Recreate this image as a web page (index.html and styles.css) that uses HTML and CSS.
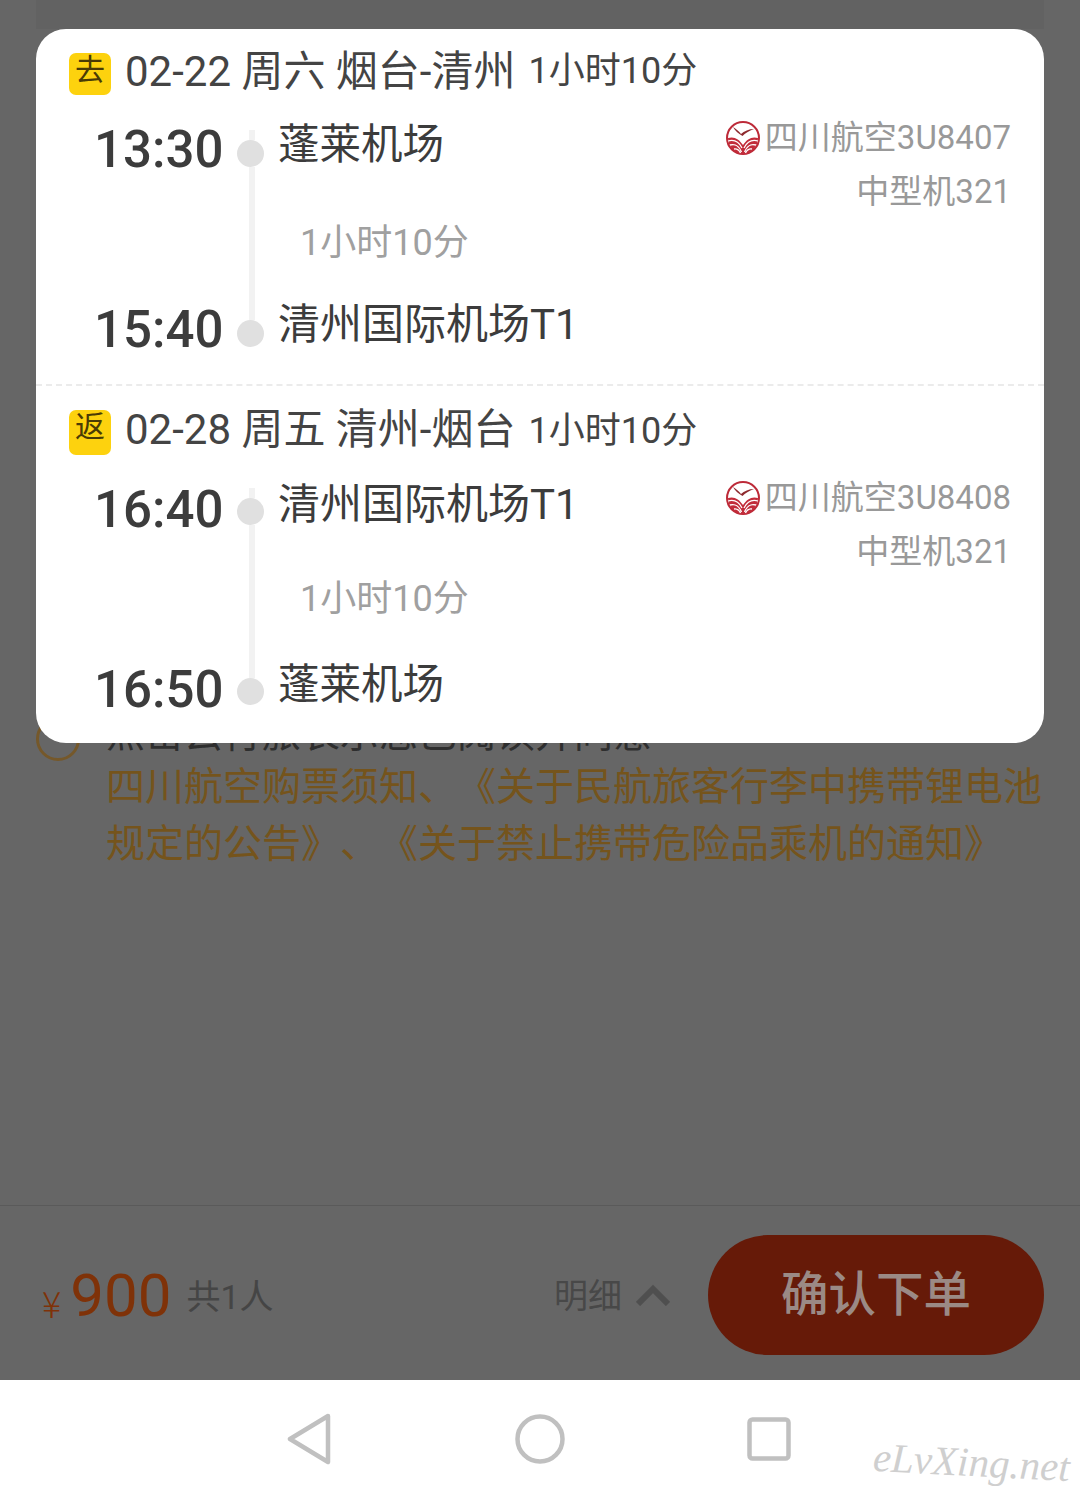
FILE: index.html
```html
<!DOCTYPE html>
<html lang="en">
<head>
    <meta charset="UTF-8">
    <meta name="viewport" content="width=device-width, initial-scale=1.0">
    <title>确认订单</title>
    <link rel="stylesheet" href="styles.css">
</head>
<body>

    <div class="screen">
        <div class="behind-strip"></div>

        <!-- Flight details sheet -->
        <div class="sheet">
            <div class="leg leg-out">
                <div class="leg-head">
                    <span class="badge">去</span>
                    <span class="leg-route">02-22 周六 烟台-清州</span>
                    <span class="leg-total">1小时10分</span>
                </div>
                <div class="segment">
                    <div class="time">13:30</div>
                    <div class="rail">
                        <div class="rail-stub"></div>
                        <div class="rail-dot"></div>
                        <div class="rail-line"></div>
                        <div class="rail-dot"></div>
                    </div>
                    <div class="airport">蓬莱机场</div>
                    <div class="carrier">
                        <div class="carrier-name">
                            <svg class="airline-logo" viewBox="0 0 34 34">
                                <circle cx="17" cy="17" r="16" fill="#fff" stroke="#bd2a38" stroke-width="2"/>
                                <path d="M2 17 C8 15 13 18 17 24 C21 18 26 15 32 17 C32 25 26 33 17 33 C8 33 2 25 2 17 Z" fill="#c22c3a"/>
                                <path d="M2 20 C9 18 13 21 16 27 M32 20 C25 18 21 21 18 27 M4 24 C10 22.500 13 25 15.500 31 M30 24 C24 22.500 21 25 18.500 31 M8 28 C11 27.500 13 29 14.500 32 M26 28 C23 27.500 21 29 19.500 32" fill="none" stroke="#fff" stroke-width="1.300"/>
                                <path d="M7 6 C10 8 13 10 15 13 C18 10 23 8 28 8 C23 10 19 12 16.500 15 C13 13 9 10 7 6 Z" fill="#8e2a2e"/>
                            </svg>
                            四川航空3U8407
                        </div>
                        <div class="carrier-plane">中型机321</div>
                    </div>
                    <div class="duration">1小时10分</div>
                    <div class="time time-end">15:40</div>
                    <div class="airport airport-end airport-long">清州国际机场T1</div>
                </div>
            </div>

            <div class="leg leg-back">
                <div class="leg-head">
                    <span class="badge badge-tall">返</span>
                    <span class="leg-route">02-28 周五 清州-烟台</span>
                    <span class="leg-total">1小时10分</span>
                </div>
                <div class="segment segment-back">
                    <div class="time">16:40</div>
                    <div class="rail">
                        <div class="rail-stub"></div>
                        <div class="rail-dot"></div>
                        <div class="rail-line"></div>
                        <div class="rail-dot"></div>
                    </div>
                    <div class="airport airport-long">清州国际机场T1</div>
                    <div class="carrier">
                        <div class="carrier-name">
                            <svg class="airline-logo" viewBox="0 0 34 34">
                                <circle cx="17" cy="17" r="16" fill="#fff" stroke="#bd2a38" stroke-width="2"/>
                                <path d="M2 17 C8 15 13 18 17 24 C21 18 26 15 32 17 C32 25 26 33 17 33 C8 33 2 25 2 17 Z" fill="#c22c3a"/>
                                <path d="M2 20 C9 18 13 21 16 27 M32 20 C25 18 21 21 18 27 M4 24 C10 22.500 13 25 15.500 31 M30 24 C24 22.500 21 25 18.500 31 M8 28 C11 27.500 13 29 14.500 32 M26 28 C23 27.500 21 29 19.500 32" fill="none" stroke="#fff" stroke-width="1.300"/>
                                <path d="M7 6 C10 8 13 10 15 13 C18 10 23 8 28 8 C23 10 19 12 16.500 15 C13 13 9 10 7 6 Z" fill="#8e2a2e"/>
                            </svg>
                            四川航空3U8408
                        </div>
                        <div class="carrier-plane">中型机321</div>
                    </div>
                    <div class="duration duration-back">1小时10分</div>
                    <div class="time time-end">16:50</div>
                    <div class="airport airport-end">蓬莱机场</div>
                </div>
            </div>
        </div>

        <!-- Agreement text, partly under the sheet -->
        <div class="notice">
            <div class="notice-check"></div>
            <div class="notice-text">
                <div class="notice-lead">点击云行旅表示您已阅读并同意</div>
                <div class="notice-links">四川航空购票须知、《关于民航旅客行李中携带锂电池规定的公告》、《关于禁止携带危险品乘机的通知》</div>
            </div>
        </div>

        <!-- Price bar -->
        <div class="price-bar">
            <div class="price">
                <span class="price-sign">¥</span>
                <span class="price-num">900</span>
                <span class="price-people">共1人</span>
            </div>
            <div class="detail-toggle">
                <span>明细</span>
                <svg class="chevron" viewBox="0 0 34 22">
                    <path d="M2 20 L17 5 L32 20" fill="none" stroke="#4f4f4f" stroke-width="6"/>
                </svg>
            </div>
            <button class="confirm-btn">确认下单</button>
        </div>
    </div>

    <!-- Android nav bar -->
    <div class="nav-bar">
        <svg class="nav-back" viewBox="0 0 44 52">
            <path d="M41 3 L3 26 L41 49 Z" fill="none" stroke="#c0c0c0" stroke-width="4.500" stroke-linejoin="round"/>
        </svg>
        <svg class="nav-home" viewBox="0 0 50 50">
            <circle cx="25" cy="25" r="22.500" fill="none" stroke="#c0c0c0" stroke-width="4.500"/>
        </svg>
        <svg class="nav-recent" viewBox="0 0 44 44">
            <rect x="2.500" y="2.500" width="39" height="39" rx="3" fill="none" stroke="#c0c0c0" stroke-width="4.500"/>
        </svg>
        <div class="watermark">eLvXing.net</div>
    </div>

</body>
</html>
```

FILE: styles.css
```css
* {
    box-sizing: border-box;
}
body {
    margin: 0;
    width: 1080px;
    height: 1498px;
    overflow: hidden;
    font-family: Roboto, 'Noto Sans CJK SC', sans-serif;
    background: #666;
    text-spacing-trim: space-all;
}

.screen {
    height: 1380px;
    background: #666;
    display: flex;
    flex-direction: column;
}
.behind-strip {
    height: 29px;
    margin: 0 36px;
    background: #626262;
}

.sheet {
    position: relative;
    z-index: 1;
    height: 714px;
    margin: 0 36px;
    background: #fff;
    border-radius: 30px;
}
.leg {
    padding: 24px 33px 0 33px;
    height: 355px;
}
.leg-back {
    height: 359px;
    padding-top: 24px;
    border-top: 2px dashed #ebebeb;
}
.leg-head {
    display: flex;
    align-items: flex-start;
    height: 42px;
    color: #444;
}
.badge {
    width: 42px;
    height: 42px;
    flex: none;
    background: #fdd20e;
    border-radius: 7px;
    color: #4a3b05;
    font-size: 30px;
    line-height: 34px;
    text-align: center;
}
.badge-tall {
    height: 45px;
}
.leg-route {
    margin-left: 14px;
    margin-top: -2px;
    font-size: 42px;
    line-height: 42px;
    white-space: nowrap;
}
.leg-total {
    margin-left: 13px;
    margin-top: -3px;
    font-size: 36px;
    line-height: 42px;
    white-space: nowrap;
}
.leg-back .leg-route {
    margin-top: -1px;
}
.leg-back .leg-total {
    margin-top: 0;
}

.segment {
    display: grid;
    grid-template-columns: 128px 27px 1fr auto;
    grid-template-rows: 70px 120px 60px;
    column-gap: 15px;
    margin-top: 15px;
    padding-left: 25px;
}
.segment-back {
    margin-top: 18px;
}
.time {
    grid-column: 1;
    font-size: 51px;
    font-weight: 500;
    line-height: 60px;
    color: #3c3c3c;
    white-space: nowrap;
    align-self: end;
    margin-top: -1px;
}
.time-end {
    grid-row: 3;
}
.rail {
    grid-column: 2;
    grid-row: 1 / 4;
    margin-top: 20px;
    display: flex;
    flex-direction: column;
}
.segment-back .rail {
    margin-top: 18px;
}
.rail-stub,
.rail-line {
    width: 6px;
    margin-left: 12px;
    background: #f2f2f2;
}
.rail-stub {
    height: 10px;
}
.rail-line {
    height: 153px;
}
.rail-dot {
    width: 27px;
    height: 27px;
    flex: none;
    border-radius: 50%;
    background: #e0e0e0;
}
.airport {
    grid-column: 3;
    margin-top: 11px;
    margin-left: -1px;
    font-size: 41.500px;
    line-height: 48px;
    color: #3c3c3c;
    white-space: nowrap;
}
.airport-long {
    font-size: 42px;
}
.airport-end {
    grid-row: 3;
    margin-top: 1px;
}
.carrier {
    grid-column: 4;
    grid-row: 1 / 3;
    margin-top: 1px;
    text-align: right;
    color: #999;
    line-height: 54px;
}
.carrier-name {
    display: flex;
    align-items: center;
    font-size: 33px;
    white-space: nowrap;
}
.carrier-plane {
    font-size: 33px;
}
.airline-logo {
    width: 34px;
    height: 34px;
    margin-right: 5px;
}
.duration {
    grid-column: 3;
    grid-row: 2;
    align-self: center;
    margin-top: -2px;
    padding-left: 21px;
    font-size: 36px;
    color: #a0a0a0;
}
.duration-back {
    margin-top: -10px;
}

.notice {
    display: flex;
    margin-top: -26px;
    padding-left: 36px;
}
.notice-check {
    width: 44px;
    height: 44px;
    flex: none;
    border: 3px solid #75582a;
    border-radius: 50%;
}
.notice-text {
    margin-left: 26px;
    margin-top: -15px;
    width: 940px;
    font-size: 39px;
    line-height: 57px;
}
.notice-lead {
    margin-top: 4px;
    margin-bottom: -4px;
    color: #2e2e2e;
}
.notice-links {
    color: #75541c;
}

.price-bar {
    display: flex;
    align-items: center;
    margin-top: auto;
    height: 175px;
    padding: 4px 36px 0 42px;
    border-top: 1px solid #5a5a5a;
}
.price {
    display: flex;
    align-items: center;
    flex: 1;
}
.price-sign {
    margin-top: 14px;
    font-family: 'Noto Sans CJK SC', sans-serif;
    font-size: 36px;
    font-weight: 300;
    color: #7f3208;
}
.price-num {
    margin-left: 9px;
    font-size: 60px;
    color: #7f3208;
}
.price-people {
    margin-left: 15px;
    margin-top: -2px;
    font-size: 34px;
    color: #454545;
}
.detail-toggle {
    display: flex;
    align-items: center;
    margin-top: -4px;
    margin-right: 38px;
    font-size: 34px;
    color: #484848;
}
.chevron {
    width: 34px;
    height: 22px;
    margin-left: 14px;
    margin-top: 4px;
}
.confirm-btn {
    width: 336px;
    height: 120px;
    padding: 0 0 9px;
    border: none;
    border-radius: 60px;
    background: #661a08;
    color: #9b8a85;
    font-family: inherit;
    font-size: 47.500px;
    font-weight: 500;
}

.nav-bar {
    position: relative;
    height: 118px;
    background: #fff;
    display: flex;
    align-items: center;
    justify-content: center;
    gap: 184px;
}
.nav-back {
    width: 44px;
    height: 52px;
}
.nav-home {
    width: 50px;
    height: 50px;
}
.nav-recent {
    width: 44px;
    height: 44px;
    margin-left: -2px;
    margin-right: 2px;
}
.watermark {
    position: absolute;
    right: 10px;
    bottom: 12px;
    font-family: 'Liberation Serif', serif;
    font-style: italic;
    font-size: 41px;
    color: #cfcfcf;
    transform: rotate(3deg);
}
```
